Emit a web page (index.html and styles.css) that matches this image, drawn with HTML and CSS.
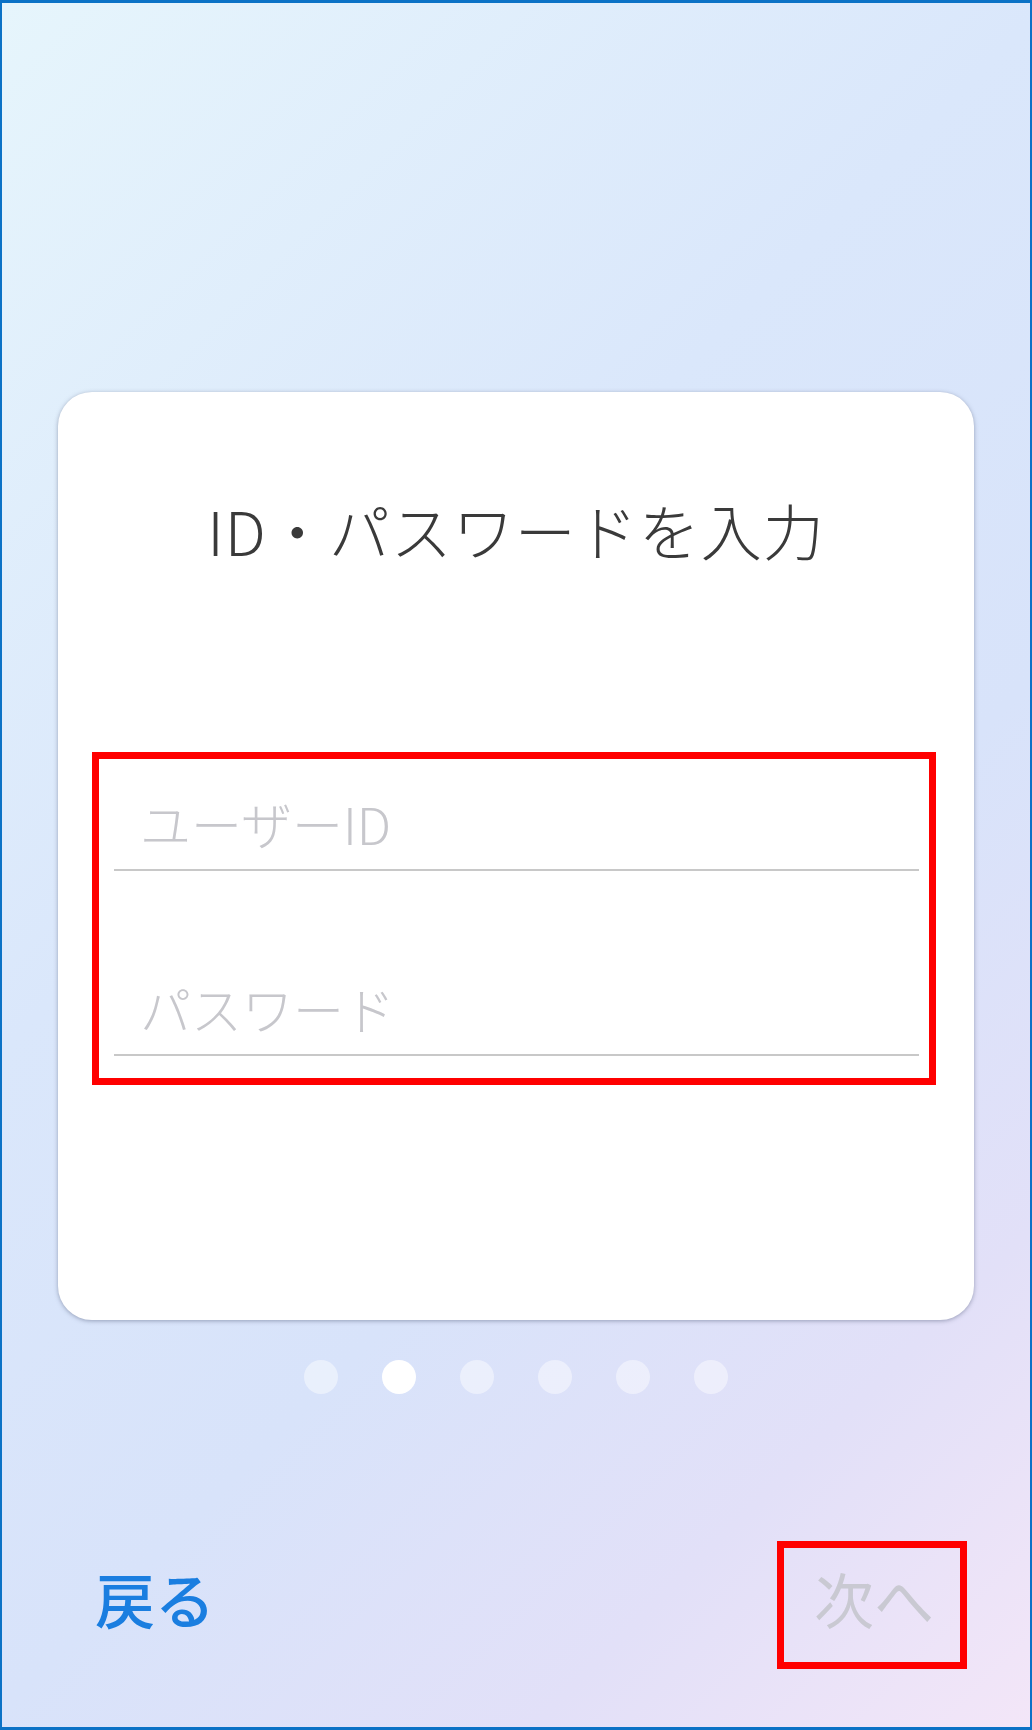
FILE: index.html
```html
<!DOCTYPE html>
<html lang="ja">
<head>
    <meta charset="utf-8">
    <title>ID・パスワードを入力</title>
    <link rel="stylesheet" href="styles.css">
</head>
<body>
    <div class="screen">
        <div class="card">
            <h1 class="card-title">ID・パスワードを入力</h1>

            <!-- highlighted input area -->
            <div class="login-fields">
                <div class="field">
                    <input type="text" placeholder="ユーザーID">
                </div>
                <div class="field">
                    <input type="password" placeholder="パスワード">
                </div>
            </div>
        </div>

        <div class="pager">
            <span class="dot"></span>
            <span class="dot active"></span>
            <span class="dot"></span>
            <span class="dot"></span>
            <span class="dot"></span>
            <span class="dot"></span>
        </div>

        <div class="footer">
            <button class="nav-btn back">戻る</button>
            <button class="nav-btn next" disabled>次へ</button>
        </div>
    </div>
</body>
</html>
```

FILE: styles.css
```css
html, body {
    margin: 0;
    padding: 0;
}
body {
    font-family: "Noto Sans CJK JP", "Noto Sans", sans-serif;
}
.screen {
    box-sizing: border-box;
    width: 1032px;
    height: 1730px;
    border: 2px solid #0b72c6;
    border-top-width: 3px;
    border-bottom-width: 3px;
    background: linear-gradient(135deg, #e6f5fc 0%, #dae7fb 38%, #d8e3fa 62%, #e2e0f8 82%, #f3e6f8 100%);
    display: flex;
    flex-direction: column;
    align-items: center;
}
.card {
    box-sizing: border-box;
    width: 916px;
    height: 928px;
    margin-top: 389px;
    padding-top: 108px;
    background: #fff;
    border-radius: 34px;
    box-shadow: 0 1px 4px rgba(80, 90, 120, 0.5);
}
.card-title {
    margin: 0 0 3px;
    font-size: 61px;
    line-height: 60px;
    font-weight: 300;
    color: #3a3a3a;
    text-align: center;
    letter-spacing: 1px;
}
.login-fields {
    box-sizing: border-box;
    width: 844px;
    margin: 192px 0 0 34px;
    padding: 0 10px 22px 15px;
    border: 7px solid #ff0000;
}
.field {
    padding: 34px 0 16px;
    border-bottom: 2px solid #c8c8c8;
}
.field + .field {
    margin-top: 73px;
}
.field input {
    box-sizing: border-box;
    display: block;
    width: 100%;
    height: 60px;
    padding: 0 0 0 26px;
    border: none;
    outline: none;
    background: transparent;
    font-family: inherit;
    font-size: 51px;
    font-weight: 300;
    color: #333;
}
.field input::placeholder {
    color: #c7c7cc;
}
.pager {
    display: flex;
    gap: 44px;
    margin-top: 40px;
}
.dot {
    width: 34px;
    height: 34px;
    border-radius: 50%;
    background: rgba(255, 255, 255, 0.45);
}
.dot.active {
    background: #fff;
}
.footer {
    box-sizing: border-box;
    width: 100%;
    margin-top: 147px;
    padding: 0 63px 0 93px;
    display: flex;
    justify-content: space-between;
    align-items: center;
}
.nav-btn {
    border: none;
    background: none;
    padding: 0 0 14px;
    font-family: inherit;
    font-size: 60px;
    line-height: 1;
    cursor: pointer;
}
.back {
    color: #1a7ee0;
    font-weight: 500;
}
.next {
    box-sizing: border-box;
    width: 190px;
    height: 128px;
    border: 7px solid #ff0000;
    color: #c9c9d2;
    padding-left: 4px;
}
```
